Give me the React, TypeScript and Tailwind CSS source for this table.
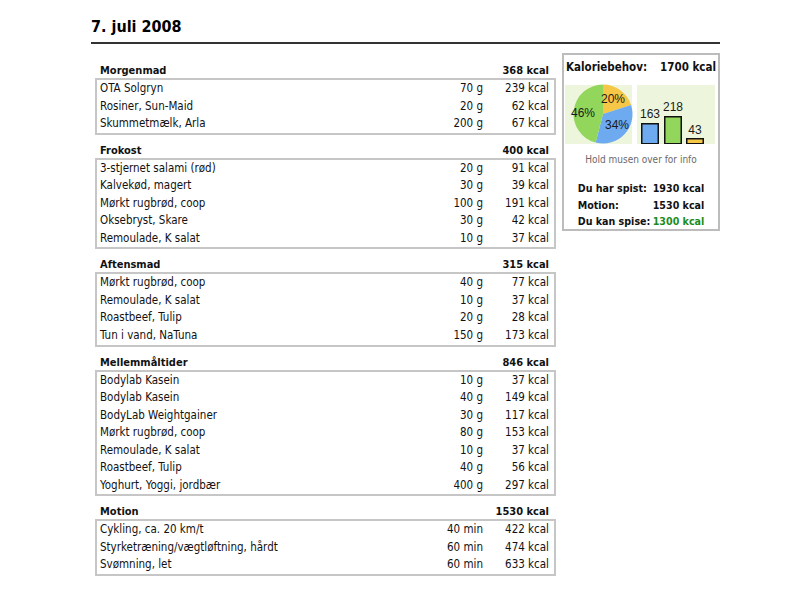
type Item = { name: string; amount: string; kcal: string };
type Section = { title: string; total: string; items: Item[] };

const sections: Section[] = [
  {
    title: "Morgenmad",
    total: "368 kcal",
    items: [
      { name: "OTA Solgryn", amount: "70 g", kcal: "239 kcal" },
      { name: "Rosiner, Sun-Maid", amount: "20 g", kcal: "62 kcal" },
      { name: "Skummetmælk, Arla", amount: "200 g", kcal: "67 kcal" },
    ],
  },
  {
    title: "Frokost",
    total: "400 kcal",
    items: [
      { name: "3-stjernet salami (rød)", amount: "20 g", kcal: "91 kcal" },
      { name: "Kalvekød, magert", amount: "30 g", kcal: "39 kcal" },
      { name: "Mørkt rugbrød, coop", amount: "100 g", kcal: "191 kcal" },
      { name: "Oksebryst, Skare", amount: "30 g", kcal: "42 kcal" },
      { name: "Remoulade, K salat", amount: "10 g", kcal: "37 kcal" },
    ],
  },
  {
    title: "Aftensmad",
    total: "315 kcal",
    items: [
      { name: "Mørkt rugbrød, coop", amount: "40 g", kcal: "77 kcal" },
      { name: "Remoulade, K salat", amount: "10 g", kcal: "37 kcal" },
      { name: "Roastbeef, Tulip", amount: "20 g", kcal: "28 kcal" },
      { name: "Tun i vand, NaTuna", amount: "150 g", kcal: "173 kcal" },
    ],
  },
  {
    title: "Mellemmåltider",
    total: "846 kcal",
    items: [
      { name: "Bodylab Kasein", amount: "10 g", kcal: "37 kcal" },
      { name: "Bodylab Kasein", amount: "40 g", kcal: "149 kcal" },
      { name: "BodyLab Weightgainer", amount: "30 g", kcal: "117 kcal" },
      { name: "Mørkt rugbrød, coop", amount: "80 g", kcal: "153 kcal" },
      { name: "Remoulade, K salat", amount: "10 g", kcal: "37 kcal" },
      { name: "Roastbeef, Tulip", amount: "40 g", kcal: "56 kcal" },
      { name: "Yoghurt, Yoggi, jordbær", amount: "400 g", kcal: "297 kcal" },
    ],
  },
  {
    title: "Motion",
    total: "1530 kcal",
    items: [
      { name: "Cykling, ca. 20 km/t", amount: "40 min", kcal: "422 kcal" },
      { name: "Styrketræning/vægtløftning, hårdt", amount: "60 min", kcal: "474 kcal" },
      { name: "Svømning, let", amount: "60 min", kcal: "633 kcal" },
    ],
  },
];

const MealSection = ({ section }: { section: Section }) => {
  return (
    <div className="mb-[9px]">
      <div className="flex h-[14px] items-center pl-[5px] pr-[7px] font-bold leading-[14px]">
        <span className="flex-1">{section.title}</span>
        <span>{section.total}</span>
      </div>
      <div className="border-2 border-[#c6c6c6] text-[11.5px]">
        {section.items.map((item, i) => (
          <div key={i} className="flex h-[17.55px] items-center leading-[17.55px]">
            <span className="flex-1 pl-[3px]">{item.name}</span>
            <span className="w-[60px] text-right">{item.amount}</span>
            <span className="w-[71px] pr-[5px] text-right">{item.kcal}</span>
          </div>
        ))}
      </div>
    </div>
  );
};

const PieChart = () => {
  // 20% / 34% / 46%, clockwise from the top
  return (
    <svg width="67" height="59" className="overflow-visible">
      <path d="M38 29 L38 -0.5 A29.5 29.5 0 0 1 66.06 19.88 Z" fill="#f6c746" />
      <path d="M38 29 L66.06 19.88 A29.5 29.5 0 0 1 30.66 57.57 Z" fill="#6eaaf0" />
      <path d="M38 29 L30.66 57.57 A29.5 29.5 0 0 1 38 -0.5 Z" fill="#92d65c" />
      <g fontFamily="Liberation Sans, Arial, sans-serif" fontSize="12" fill="#1a1a1a" textAnchor="middle">
        <text x="48" y="18">20%</text>
        <text x="52" y="44">34%</text>
        <text x="18" y="32">46%</text>
      </g>
    </svg>
  );
};

const BarChart = () => {
  return (
    <svg width="78" height="59">
      <rect x="4.75" y="38.75" width="16.5" height="20" fill="#6eaaf0" stroke="#111" strokeWidth="1.5" />
      <rect x="27.75" y="31.75" width="16.5" height="27" fill="#92d65c" stroke="#111" strokeWidth="1.5" />
      <rect x="49.75" y="53.75" width="16.5" height="5" fill="#f6c746" stroke="#111" strokeWidth="1.5" />
      <g fontFamily="Liberation Sans, Arial, sans-serif" fontSize="12" fill="#1a1a1a" textAnchor="middle">
        <text x="13" y="33">163</text>
        <text x="36" y="26">218</text>
        <text x="58" y="49">43</text>
      </g>
    </svg>
  );
};

const CaloriePanel = () => {
  return (
    <div className="h-[178px] w-[158px] border-2 border-[#bcbcbc] pt-[5px]">
      <div className="flex justify-between px-[2px] text-[11.5px] font-bold leading-[14px]">
        <span>Kaloriebehov:</span>
        <span>1700 kcal</span>
      </div>
      <div className="mt-[11px] flex pl-[1px]">
        <div className="h-[59px] w-[67px] bg-[#eef5dd]">
          <PieChart />
        </div>
        <div className="ml-[5px] h-[59px] w-[78px] bg-[#eef5dd]">
          <BarChart />
        </div>
      </div>
      <div className="mt-[9px] text-center text-[10px] leading-[14px] text-[#6a6a6a]">
        Hold musen over for info
      </div>
      <div className="mt-[13px] grid grid-cols-[75px_auto] justify-center whitespace-nowrap text-[10.6px] font-bold leading-[16.5px]">
        <span>Du har spist:</span>
        <span>1930 kcal</span>
        <span>Motion:</span>
        <span>1530 kcal</span>
        <span>Du kan spise:</span>
        <span className="text-[#1b8c1b]">1300 kcal</span>
      </div>
    </div>
  );
};

export default function App() {
  return (
    <div className="h-[603px] w-[794px] bg-white font-['DejaVu_Sans_Condensed','Liberation_Sans',sans-serif] text-[11px] text-[#111]">
      <div className="ml-[91px] w-[629px]">
        <h1 className="border-b-2 border-[#333] pb-[6px] pt-[18px] text-[16px] font-bold leading-[18px] text-black">
          7. juli 2008
        </h1>
        <div className="mt-[9px] flex">
          <div className="ml-[4px] w-[461px] pt-[11px]">
            {sections.map((s) => (
              <MealSection key={s.title} section={s} />
            ))}
          </div>
          <div className="ml-[6px]">
            <CaloriePanel />
          </div>
        </div>
      </div>
    </div>
  );
}
